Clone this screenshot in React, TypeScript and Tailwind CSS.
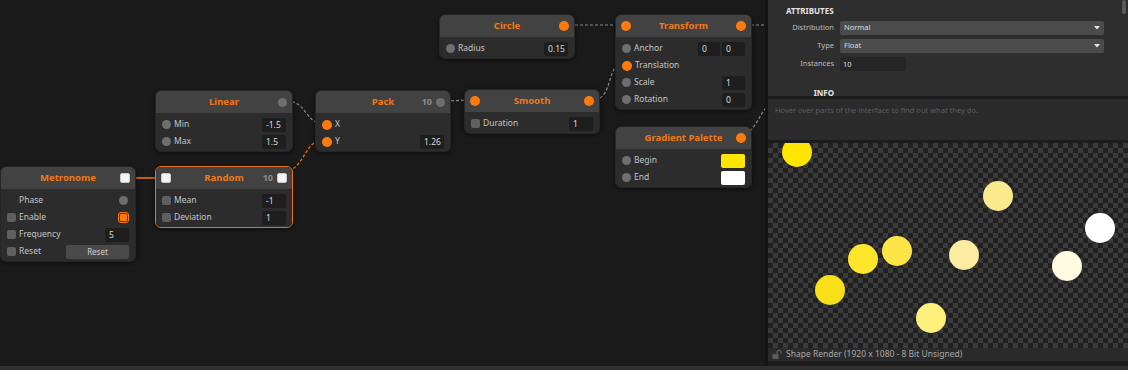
import type { ReactNode } from 'react'

type PortKind = 'gray' | 'orange' | 'square' | 'white' | 'none'

type Row = {
  label: string
  port?: PortKind
  right?: ReactNode
}

type NodeProps = {
  title: string
  x: number
  y: number
  w: number
  left?: PortKind
  right?: PortKind
  badge?: string
  rows: Row[]
  selected?: boolean
}

const font = { fontFamily: '"Noto Sans", "Open Sans", sans-serif' }

function Port({ kind }: { kind: PortKind }) {
  if (kind === 'gray') return <div className="w-[9px] h-[9px] rounded-full bg-[#6e6e6e] shrink-0" />
  if (kind === 'orange') return <div className="w-[10px] h-[10px] rounded-full bg-[#ff7a0c] shrink-0" />
  if (kind === 'square') return <div className="w-[9px] h-[9px] rounded-[2px] bg-[#5f5f5f] shrink-0" />
  if (kind === 'white')
    return <div className="w-[10px] h-[10px] rounded-[2px] bg-[#f4f4f4] border border-[#c9c9c9] shrink-0" />
  return <div className="w-[9px] h-[9px] shrink-0" />
}

function Field({ value, w = 24 }: { value: string; w?: number }) {
  return (
    <div
      className="h-[14px] rounded-[2px] bg-[#1e1e1e] text-[#dcdcdc] text-[8.5px] leading-[14px] px-[4px]"
      style={{ width: w }}
    >
      {value}
    </div>
  )
}

function Swatch({ color }: { color: string }) {
  return <div className="w-[24px] h-[14px] rounded-[2px]" style={{ background: color }} />
}

function GraphNode({ title, x, y, w, left = 'none', right = 'none', badge, rows, selected }: NodeProps) {
  return (
    <div
      className={
        'absolute rounded-[6px] overflow-hidden shadow-[0_1px_4px_rgba(0,0,0,0.5)] ' +
        (selected ? 'border-[1.5px] border-[#e8731a]' : 'border border-[#262626]')
      }
      style={{ left: x, top: y, width: w }}
    >
      <div className="h-[22px] bg-[#424242] grid grid-cols-[1fr_auto_1fr] items-center px-[5px]">
        <div className="flex items-center">
          <Port kind={left} />
        </div>
        <div className="text-center text-[9.5px] font-bold text-[#f07817] whitespace-nowrap">{title}</div>
        <div className="flex items-center justify-end gap-[4px]">
          {badge && <span className="text-[9px] font-bold text-[#8c8c8c]">{badge}</span>}
          <Port kind={right} />
        </div>
      </div>
      <div className="bg-[#2c2c2c] pt-[3px] pb-[1px]">
        {rows.map((r) => (
          <div key={r.label} className="h-[17px] flex items-center px-[6px]">
            <Port kind={r.port ?? 'none'} />
            <span className="ml-[3px] text-[8.5px] text-[#c4c4c4] flex-1 whitespace-nowrap">{r.label}</span>
            {r.right}
          </div>
        ))}
      </div>
    </div>
  )
}

function Wires() {
  return (
    <svg className="absolute inset-0" width="765" height="366">
      <g fill="none" stroke="#8a8a8a" strokeWidth="1.2" strokeDasharray="3 2">
        <path d="M287 101 C306 101 306 123 321 123" />
        <path d="M446 101 L470 100" />
        <path d="M595 99 C612 99 608 64 621 64" />
        <path d="M570 25 L621 25" />
        <path d="M746 25 L766 25" />
        <path d="M746 134 C756 128 760 114 766 108" />
      </g>
      <path d="M289 171 C304 165 306 142 321 140" fill="none" stroke="#e8731a" strokeWidth="1.3" strokeDasharray="3 2" />
      <path d="M130 178 L161 178" stroke="#e8731a" strokeWidth="1.6" />
    </svg>
  )
}

function Canvas() {
  return (
    <div className="relative w-[765px] h-full bg-[#1a1a1a] overflow-hidden">
      <Wires />
      <GraphNode
        title="Circle"
        x={439}
        y={14}
        w={136}
        right="orange"
        rows={[{ label: 'Radius', port: 'gray', right: <Field value="0.15" /> }]}
      />
      <GraphNode
        title="Transform"
        x={615}
        y={14}
        w={137}
        left="orange"
        right="orange"
        rows={[
          {
            label: 'Anchor',
            port: 'gray',
            right: (
              <div className="flex gap-[2px]">
                <Field value="0" w={22} />
                <Field value="0" w={23} />
              </div>
            ),
          },
          { label: 'Translation', port: 'orange' },
          { label: 'Scale', port: 'gray', right: <Field value="1" w={23} /> },
          { label: 'Rotation', port: 'gray', right: <Field value="0" w={23} /> },
        ]}
      />
      <GraphNode
        title="Linear"
        x={155}
        y={90}
        w={138}
        right="gray"
        rows={[
          { label: 'Min', port: 'gray', right: <Field value="-1.5" /> },
          { label: 'Max', port: 'gray', right: <Field value="1.5" /> },
        ]}
      />
      <GraphNode
        title="Pack"
        x={315}
        y={90}
        w={136}
        right="gray"
        badge="10"
        rows={[
          { label: 'X', port: 'orange' },
          { label: 'Y', port: 'orange', right: <Field value="1.26" /> },
        ]}
      />
      <GraphNode
        title="Smooth"
        x={464}
        y={89}
        w={136}
        left="orange"
        right="orange"
        rows={[{ label: 'Duration', port: 'square', right: <Field value="1" /> }]}
      />
      <GraphNode
        title="Gradient Palette"
        x={615}
        y={126}
        w={137}
        right="orange"
        rows={[
          { label: 'Begin', port: 'gray', right: <Swatch color="#ffe500" /> },
          { label: 'End', port: 'gray', right: <Swatch color="#ffffff" /> },
        ]}
      />
      <GraphNode
        title="Metronome"
        x={0}
        y={166}
        w={136}
        right="white"
        rows={[
          { label: 'Phase', right: <div className="w-[9px] h-[9px] mr-[1px] rounded-full bg-[#6e6e6e]" /> },
          {
            label: 'Enable',
            port: 'square',
            right: (
              <div className="w-[11px] h-[11px] rounded-[3px] border border-[#ff7a0c] bg-[#5a3418] p-[1px]">
                <div className="w-full h-full rounded-[1px] bg-[#ff7a0c]" />
              </div>
            ),
          },
          { label: 'Frequency', port: 'square', right: <Field value="5" /> },
          {
            label: 'Reset',
            port: 'square',
            right: (
              <div className="w-[63px] h-[14px] rounded-[2px] bg-[#4a4a4a] text-[8px] leading-[14px] text-center text-[#cfcfcf]">
                Reset
              </div>
            ),
          },
        ]}
      />
      <GraphNode
        title="Random"
        x={155}
        y={166}
        w={138}
        left="white"
        right="white"
        badge="10"
        selected
        rows={[
          { label: 'Mean', port: 'square', right: <Field value="-1" /> },
          { label: 'Deviation', port: 'square', right: <Field value="1" /> },
        ]}
      />
    </div>
  )
}

const dots = [
  { x: 14, y: -6, c: '#ffe500' },
  { x: 215, y: 38, c: '#fbe98e' },
  { x: 317, y: 70, c: '#ffffff' },
  { x: 80, y: 101, c: '#fde52c' },
  { x: 114, y: 93, c: '#fde547' },
  { x: 181, y: 97, c: '#fbeca2' },
  { x: 284, y: 108, c: '#fffbe2' },
  { x: 47, y: 132, c: '#f8df18' },
  { x: 148, y: 160, c: '#fff07c' },
]

function Dropdown({ value }: { value: string }) {
  return (
    <div className="w-[264px] h-[14px] rounded-[2px] bg-[#4b4b4b] flex items-center justify-between px-[4px]">
      <span className="text-[7.5px] text-[#dedede]">{value}</span>
      <svg width="6" height="4" viewBox="0 0 6 4">
        <path d="M0 0 L6 0 L3 3.5 Z" fill="#e6e6e6" />
      </svg>
    </div>
  )
}

function SidePanel() {
  return (
    <div className="flex-1 flex flex-col bg-[#1c1c1c]">
      <div className="relative h-[96px] bg-[#2e2e2e] pt-[5px]">
        <div className="absolute right-[2px] top-0 w-[4px] h-[14px] rounded-[2px] bg-[#5a5a5a]" />
        <div className="pl-[18px] text-[8px] font-bold text-[#e4e4e4] h-[12px] leading-[12px]">ATTRIBUTES</div>
        <div className="mt-[4px] grid grid-cols-[66px_1fr] gap-x-[6px] gap-y-[4px] items-center">
          <div className="text-right text-[7.5px] text-[#bdbdbd]">Distribution</div>
          <Dropdown value="Normal" />
          <div className="text-right text-[7.5px] text-[#bdbdbd]">Type</div>
          <Dropdown value="Float" />
          <div className="text-right text-[7.5px] text-[#bdbdbd]">Instances</div>
          <div className="w-[66px] h-[14px] rounded-[2px] bg-[#262626] text-[7.5px] leading-[14px] px-[3px] text-[#dedede]">
            10
          </div>
        </div>
        <div className="mt-[16px] w-[66px] text-right text-[8px] font-bold text-[#e4e4e4]">INFO</div>
      </div>
      <div className="h-[3px]" />
      <div className="h-[41px] bg-[#2b2b2b] px-[7px] pt-[6px] text-[7.5px] text-[#5e5e5e]">
        Hover over parts of the interface to find out what they do.
      </div>
      <div className="h-[3px]" />
      <div className="relative h-[205px] overflow-hidden bg-[conic-gradient(#3a3a3a_25%,#202020_0_50%,#3a3a3a_0_75%,#202020_0)] bg-[length:10px_10px]">
        {dots.map((d, i) => (
          <div
            key={i}
            className="absolute w-[30px] h-[30px] rounded-full"
            style={{ left: d.x, top: d.y, background: d.c }}
          />
        ))}
      </div>
      <div className="h-[13px] bg-[#2a2a2a] flex items-center pl-[4px] gap-[4px]">
        <svg width="10" height="9" viewBox="0 0 10 9">
          <rect x="0.5" y="4" width="6" height="5" rx="0.5" fill="#5c5c5c" />
          <path d="M5 4 V2.5 a2 2 0 0 1 4 0 V4" fill="none" stroke="#5c5c5c" strokeWidth="1.2" />
        </svg>
        <span className="text-[8.5px] text-[#a8a8a8]">Shape Render (1920 x 1080 - 8 Bit Unsigned)</span>
      </div>
    </div>
  )
}

export default function App() {
  return (
    <div className="w-[1128px] h-[370px] flex flex-col bg-[#1a1a1a] overflow-hidden" style={font}>
      <div className="flex h-[366px]">
        <Canvas />
        <div className="w-[3px] bg-[#141414]" />
        <SidePanel />
      </div>
      <div className="h-[4px] bg-[#303030]" />
    </div>
  )
}
